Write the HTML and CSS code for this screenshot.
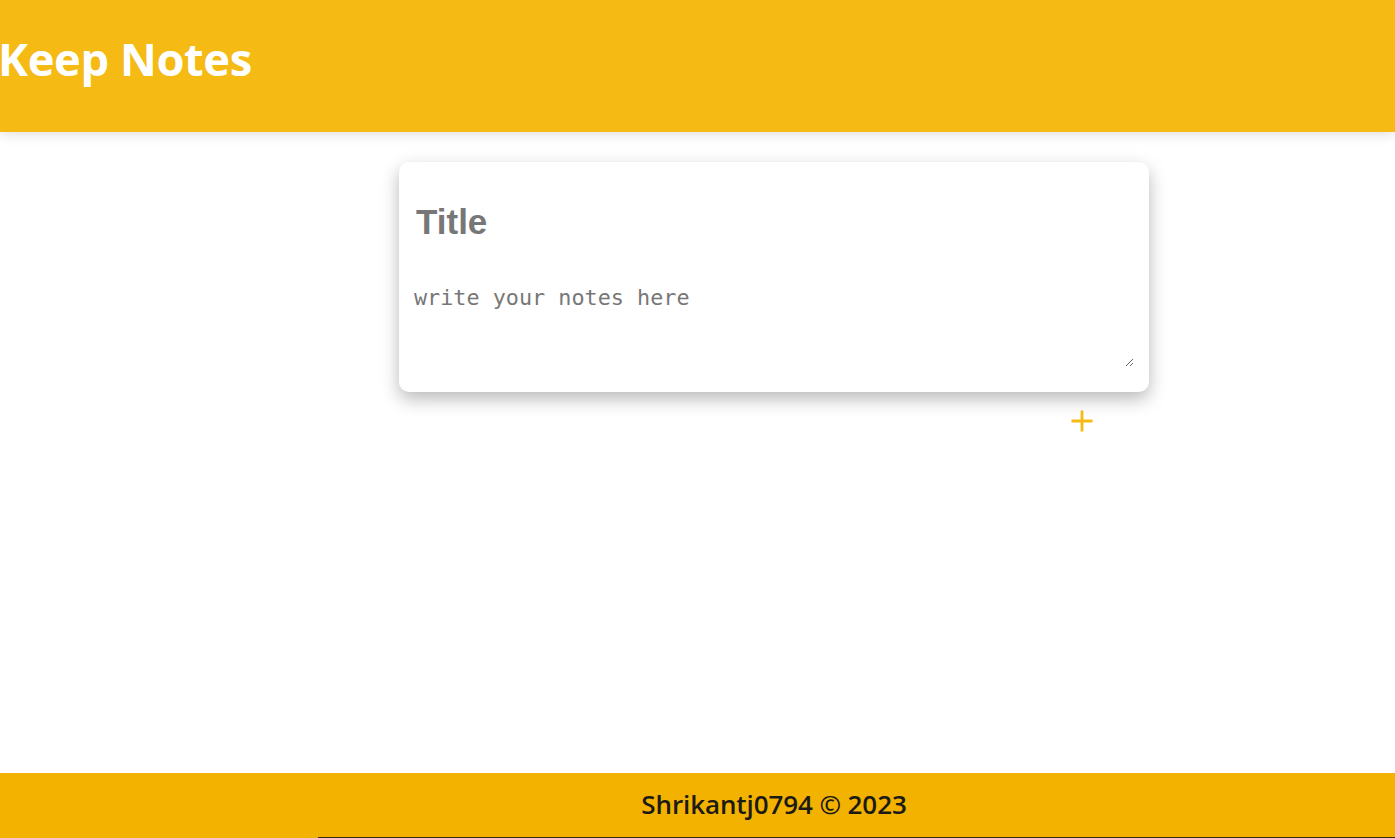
FILE: index.html
```html
<!DOCTYPE html>
<html lang="en">
<head>
<meta charset="utf-8">
<title>Keep Notes</title>
<link rel="stylesheet" href="styles.css">
</head>
<body>
<div class="page">
  <header class="header">
    <h1 class="brand">Keep Notes</h1>
  </header>
  <main class="main">
    <div class="create-wrap">
      <form class="create-note">
        <input class="note-title" type="text" name="title" placeholder="Title">
        <textarea class="note-content" name="content" placeholder="write your notes here" rows="3"></textarea>
      </form>
      <div class="actions">
        <button class="add-btn" type="button" aria-label="Add note">
          <svg width="24" height="24" viewBox="0 0 24 24"><path d="M12 1.5V22.5M1.5 12H22.5" stroke="#f5ba13" stroke-width="2.8" fill="none"/></svg>
        </button>
      </div>
    </div>
  </main>
  <footer class="footer">
    <p class="footer-text">Shrikantj0794 © 2023</p>
  </footer>
</div>
</body>
</html>
```

FILE: styles.css
```css
* { box-sizing: border-box; }
html, body { margin: 0; padding: 0; }
body {
  font-family: "Open Sans", "Noto Sans", sans-serif;
  background: #fff;
  overflow: hidden;
}
.page {
  min-height: 838px;
  display: flex;
  flex-direction: column;
}
.header {
  height: 132px;
  background: #f5ba13;
  box-shadow: 0 0 14px 0 rgba(0, 0, 0, 0.18);
  display: flex;
  align-items: center;
  position: relative;
  z-index: 1;
}
.brand {
  margin: 0 0 0 -2px;
  color: #fff;
  font-size: 45.3px;
  font-weight: 700;
  letter-spacing: -0.4px;
  line-height: 1;
  padding-bottom: 14px;
}
.main {
  flex: 1;
  padding-left: 153px;
  padding-top: 30px;
}
.create-wrap {
  width: 750px;
  margin: 0 auto;
}
.create-note {
  background: #fff;
  border-radius: 10px;
  box-shadow: 0 7px 18px rgba(0, 0, 0, 0.28);
  padding: 40px 15px 15px 15px;
  display: flex;
  flex-direction: column;
  height: 230px;
}
.note-title {
  border: none;
  outline: none;
  font-family: "Liberation Sans", Arial, sans-serif;
  font-size: 35px;
  font-weight: 700;
  color: #555;
  padding: 0;
  margin: 0 0 0 2px;
  height: 40px;
}
.note-title::placeholder { color: #777; }
.note-content {
  border: none;
  outline: none;
  font-family: "DejaVu Sans Mono", "Liberation Mono", monospace;
  font-size: 21.8px;
  color: #555;
  padding: 0;
  margin-top: 43px;
  height: 82px;
  resize: vertical;
}
.note-content::placeholder { color: #777; }
.actions {
  display: flex;
  justify-content: flex-end;
  padding-right: 55px;
  padding-top: 17px;
}
.add-btn {
  border: none;
  background: transparent;
  padding: 0;
  width: 24px;
  height: 24px;
  cursor: pointer;
  display: flex;
}
.footer {
  height: 65px;
  background: #f3b200;
  display: flex;
  align-items: center;
  justify-content: center;
  padding-left: 153px;
  position: relative;
}
.footer::after {
  content: "";
  position: absolute;
  left: 318px;
  right: 0;
  bottom: 0;
  height: 1px;
  background: #3a2a05;
}
.footer-text {
  margin: 0 0 3px 0;
  font-size: 26px;
  font-weight: 600;
  letter-spacing: -0.1px;
  color: #1c1a14;
}
```
